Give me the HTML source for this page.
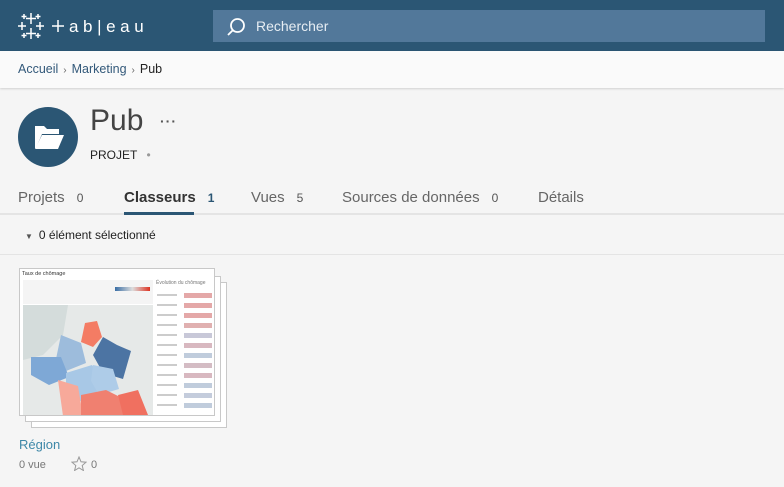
<!DOCTYPE html>
<html><head><meta charset="utf-8"><style>
*{box-sizing:border-box;margin:0;padding:0}
body{width:784px;height:487px;overflow:hidden;background:#f5f5f5;font-family:"Liberation Sans",Arial,sans-serif;position:relative}
.hdr{position:absolute;left:0;top:0;width:784px;height:51px;background:#2b5674}
.search{position:absolute;left:213px;top:10px;width:552px;height:32px;background:#52789a}
.search span{position:absolute;left:43px;top:8px;color:#e6edf3;font-size:14px}
.bc{position:absolute;left:0;top:51px;width:784px;height:37px;background:#fafafa;box-shadow:0 1px 2px rgba(0,0,0,.15)}
.bc div{position:absolute;left:18px;top:11px;font-size:12.5px;color:#33597a}
.bc b{font-weight:normal;color:#222}
.bc i{font-style:normal;color:#666;font-size:10px;margin:0 5px}
.circ{position:absolute;left:18px;top:107px;width:60px;height:60px;border-radius:50%;background:#2b5674}
.title{position:absolute;left:90px;top:104px;font-size:30px;color:#444}
.dots{position:absolute;left:160px;top:113px;font-size:14px;color:#555;letter-spacing:1px;font-weight:bold}
.proj{position:absolute;left:90px;top:148px;font-size:12px;color:#222}
.tabs{position:absolute;left:0;top:189px;font-size:15px;color:#666;width:784px}
.tabs span{position:absolute;top:0;white-space:nowrap}
.tabs small{font-size:12px;margin-left:12px;color:#555}
.tline{position:absolute;left:0;top:213px;width:784px;height:2px;background:#e4e4e4}
.uline{position:absolute;left:124px;top:212px;width:70px;height:3px;background:#2b5674}
.sel{position:absolute;left:25px;top:228px;font-size:12px;color:#222}
.sline{position:absolute;left:0;top:254px;width:784px;height:1px;background:#e4e4e4}
.pg{position:absolute;background:#fff;border:1px solid #c8c8c8}
</style></head><body>
<div class="hdr">
<svg style="position:absolute;left:18px;top:11px" width="135" height="30" viewBox="0 0 135 30">
<g stroke="#fff" stroke-width="1.5" fill="none">
<path d="M13 2v11M8 7.5h10M13 17v11M8 22.5h10M4 11v8M0 15h8M22 11v8M18 15h8M6 3v5M3.5 5.5h5M20 3v5M17.5 5.5h5M6 22v5M3.5 24.5h5M20 22v5M17.5 24.5h5"/>
<path d="M40 9v12M34 15h12"/>
</g>
<text x="51" y="21" fill="#fff" font-family="Liberation Sans" font-size="17" letter-spacing="4.6">ab|eau</text>
</svg>
<div class="search"><svg style="position:absolute;left:13px;top:7px" width="20" height="20" viewBox="0 0 20 20"><circle cx="11.5" cy="8.5" r="6.5" stroke="#fff" stroke-width="1.8" fill="none"/><path d="M6.8 13.2L2 18" stroke="#fff" stroke-width="1.8"/></svg><span>Rechercher</span></div>
</div>
<div class="bc"><div>Accueil<i>›</i>Marketing<i>›</i><b>Pub</b></div></div>
<div class="circ"><svg style="position:absolute;left:15px;top:16px" width="32" height="28" viewBox="0 0 32 28"><path d="M2 3h9l3 3h12v5H9L3 25H2z" fill="#fff"/><path d="M9 12h22l-6 14H2z" fill="#fff"/></svg></div>
<div class="title">Pub</div>
<div class="dots">···</div>
<div class="proj">PROJET <span style="color:#999;margin-left:6px">•</span></div>
<div class="tabs">
<span style="left:18px">Projets<small>0</small></span>
<span style="left:124px;color:#333;font-weight:bold">Classeurs<small style="color:#2b5674">1</small></span>
<span style="left:251px">Vues<small>5</small></span>
<span style="left:342px">Sources de données<small>0</small></span>
<span style="left:538px">Détails</span>
</div>
<div class="tline"></div><div class="uline"></div>
<div class="sel"><span style="font-size:8px;color:#555;margin-right:6px">▼</span>0 élément sélectionné</div>
<div class="sline"></div>
<div class="pg" style="left:31px;top:282px;width:196px;height:146px"></div>
<div class="pg" style="left:25px;top:276px;width:196px;height:146px"></div>
<div class="pg" style="left:19px;top:268px;width:196px;height:148px">
<div style="position:absolute;left:2px;top:2px;font-size:5.5px;color:#333">Taux de chômage</div>
<div style="position:absolute;left:3px;top:11px;width:130px;height:24px;background:#f4f4f4"></div>
<div style="position:absolute;left:95px;top:18px;width:35px;height:4px;background:linear-gradient(90deg,#3a6ea5,#ddd,#d32)"></div>
<div style="position:absolute;left:136px;top:11px;font-size:5px;color:#777">Évolution du chômage</div>
<svg style="position:absolute;left:3px;top:36px" width="130" height="110" viewBox="0 0 130 110">
<rect width="130" height="110" fill="#e6e9e8"/>
<path d="M0 0h45l-5 30-20 20-20 5z" fill="#d4dcdb"/>
<path d="M62 18l12-2 5 16-9 10-12-5z" fill="#f47c64"/>
<path d="M80 32l14 8 14 6-8 28-20-6-10-18z" fill="#4c74a3"/>
<path d="M38 30l20 8 5 20-20 8-10-12z" fill="#9dbcdc"/>
<path d="M8 52l30 0 8 20-20 8-18-10z" fill="#7ea8d6"/>
<path d="M43 68l26-8 12 18-16 20-22-6z" fill="#a8c8e6"/>
<path d="M70 60l20 4 6 20-20 6-8-14z" fill="#aecce8"/>
<path d="M35 75l20 6 5 30H40z" fill="#f7a99a"/>
<path d="M58 90l25-5 20 10 5 15H58z" fill="#f08070"/>
<path d="M95 90l20-5 10 25H100z" fill="#f07060"/>
</svg>
<svg style="position:absolute;left:136px;top:22px" width="58" height="124">
<g fill="#ccc"><rect x="1" y="3" width="20" height="2"/><rect x="1" y="13" width="20" height="2"/><rect x="1" y="23" width="20" height="2"/><rect x="1" y="33" width="20" height="2"/><rect x="1" y="43" width="20" height="2"/><rect x="1" y="53" width="20" height="2"/><rect x="1" y="63" width="20" height="2"/><rect x="1" y="73" width="20" height="2"/><rect x="1" y="83" width="20" height="2"/><rect x="1" y="93" width="20" height="2"/><rect x="1" y="103" width="20" height="2"/><rect x="1" y="113" width="20" height="2"/></g>
<rect x="28" y="2" width="28" height="5" fill="#e4a8a8"/><rect x="28" y="12" width="28" height="5" fill="#e4a8a8"/><rect x="28" y="22" width="28" height="5" fill="#e4a8a8"/><rect x="28" y="32" width="28" height="5" fill="#e0b0b0"/><rect x="28" y="42" width="28" height="5" fill="#c8c8d8"/><rect x="28" y="52" width="28" height="5" fill="#d8b8c0"/><rect x="28" y="62" width="28" height="5" fill="#c0ccdc"/><rect x="28" y="72" width="28" height="5" fill="#d4bcc4"/><rect x="28" y="82" width="28" height="5" fill="#d8b8c0"/><rect x="28" y="92" width="28" height="5" fill="#c0ccdc"/><rect x="28" y="102" width="28" height="5" fill="#c4ccdc"/><rect x="28" y="112" width="28" height="5" fill="#c0ccdc"/>
</svg>
</div>
<div style="position:absolute;left:19px;top:437px;font-size:13px;color:#3e88a8">Région</div>
<div style="position:absolute;left:19px;top:459px;font-size:11px;color:#777">0 vue</div>
<svg style="position:absolute;left:71px;top:456px" width="16" height="15" viewBox="0 0 16 15"><path d="M8 1l2 4.8 5 .4-3.8 3.3 1.2 5L8 11.8 3.6 14.5l1.2-5L1 6.2l5-.4z" fill="none" stroke="#999" stroke-width="1"/></svg>
<div style="position:absolute;left:91px;top:459px;font-size:11px;color:#777">0</div>
</body></html>
